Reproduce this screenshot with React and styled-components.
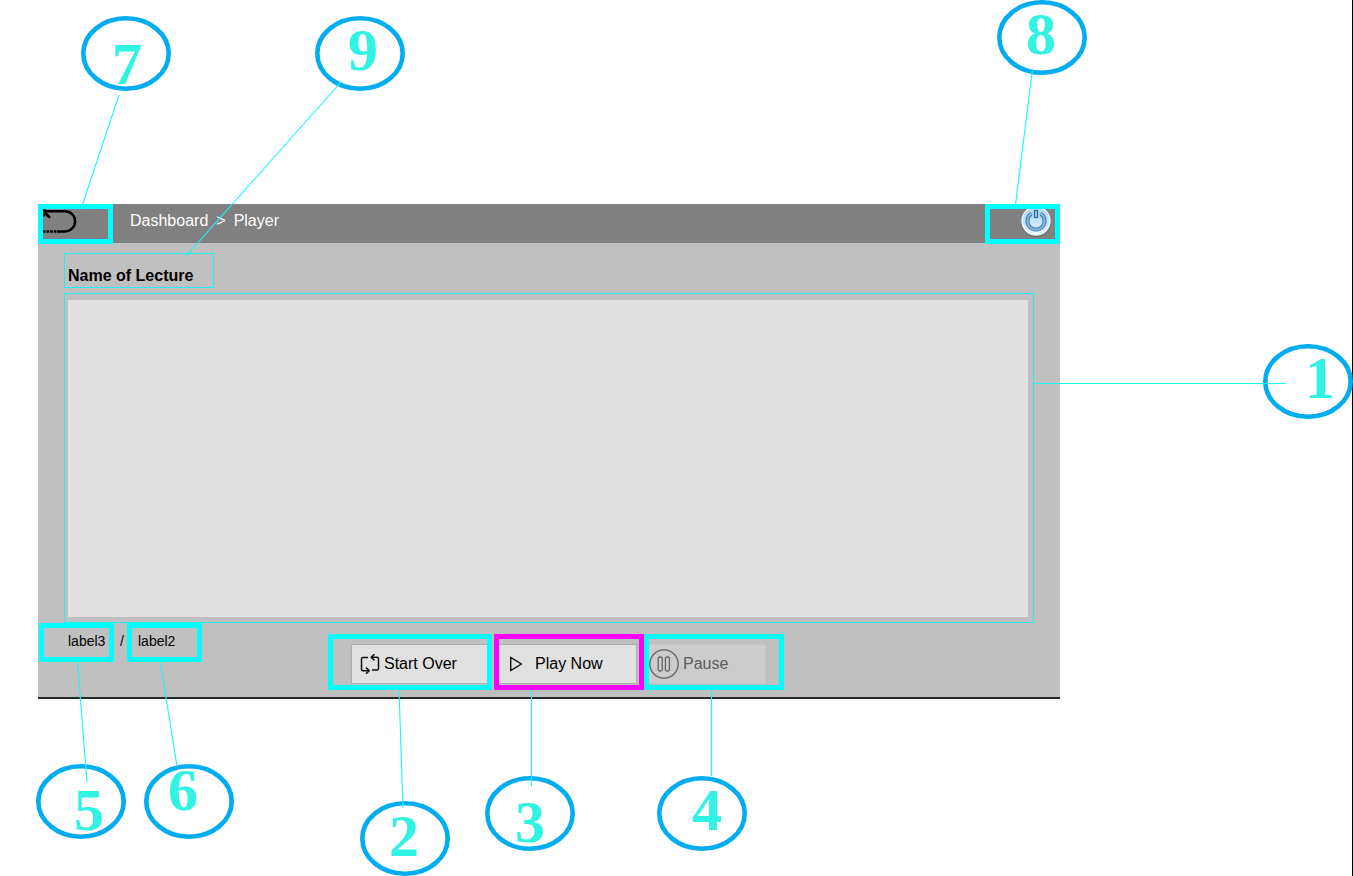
import React from "react";
import styled, { createGlobalStyle } from "styled-components";

const GlobalStyle = createGlobalStyle`
  *, *::before, *::after { box-sizing: border-box; }
  body {
    margin: 0;
    background: #ffffff;
    font-family: "Liberation Sans", Arial, sans-serif;
    font-size: 16px;
    color: #000000;
  }
`;

const Page = styled.main`
  position: relative;
  min-height: 100vh;
  padding: 204px 292px 0 38px;
  border-right: 1px solid #000000;
`;

const Player = styled.section`
  background: #c0c0c0;
  border-bottom: 2px solid #26282c;
`;

const TopBar = styled.header`
  display: flex;
  align-items: flex-start;
  height: 39px;
  background: #808080;
`;

const HeaderButton = styled.button`
  display: flex;
  justify-content: ${(p) => p.$align};
  width: 75px;
  height: 40px;
  padding: 0;
  border: 5px solid #00ffff;
  background: #808080;
  cursor: pointer;

  svg {
    display: block;
    flex: none;
  }
`;

const Breadcrumb = styled.nav`
  display: flex;
  flex: 1;
  gap: 8px;
  padding-left: 17px;
  line-height: 34px;
  color: #ffffff;

  a {
    color: inherit;
    text-decoration: none;
  }
`;

const Content = styled.div`
  padding: 10px 26px 0;
`;

const Title = styled.h1`
  width: 150px;
  height: 35px;
  margin: 0 0 5px;
  padding: 6px 0 0 3px;
  border: 1px solid #22f0f0;
  font-size: 16px;
  line-height: 32px;
  white-space: nowrap;
`;

const VideoFrame = styled.div`
  padding: 6px 5px 5px 3px;
  border: 1px solid #22f0f0;
`;

const Video = styled.div`
  height: 317px;
  background: #e0e0e0;
`;

const Footer = styled.footer`
  display: flex;
  align-items: flex-start;
  height: 74px;
  padding-left: 1px;
`;

const TimeLabel = styled.span`
  width: 75px;
  height: 39px;
  padding-left: ${(p) => p.$indent}px;
  border: 5px solid #00ffff;
  font-size: 14px;
  line-height: 26px;
`;

const Slash = styled.span`
  width: 13px;
  padding-left: 6px;
  font-size: 14px;
  line-height: 36px;
`;

const Controls = styled.div`
  display: flex;
  margin: 11px 0 0 126px;
`;

const Highlight = styled.div`
  width: ${(p) => p.$width}px;
  height: 56px;
  margin-right: ${(p) => p.$gap || 0}px;
  padding: 5px 0 1px ${(p) => p.$indent || 0}px;
  border: 5px solid ${(p) => p.$color || "#00ffff"};
`;

const ControlButton = styled.button`
  display: flex;
  align-items: center;
  gap: ${(p) => p.$gap}px;
  width: ${(p) => p.$width}px;
  height: 40px;
  padding: 0 0 0 ${(p) => p.$indent || 0}px;
  border: 1px solid #adadad;
  border-width: ${(p) => p.$edges};
  background: #e1e1e1;
  font: inherit;
  line-height: 20px;
  color: #000000;
  white-space: nowrap;

  &:disabled {
    border-color: #c4c4c4;
    background: #cccccc;
    color: #5c5c5c;
  }

  svg {
    display: block;
    flex: none;
  }
`;

const Bubble = styled.div`
  position: absolute;
  left: ${(p) => (p.$left === undefined ? "auto" : `${p.$left}px`)};
  right: ${(p) => (p.$right === undefined ? "auto" : `${p.$right}px`)};
  top: ${(p) => p.$top}px;
  width: 90px;
  height: 75px;
  pointer-events: none;

  svg {
    display: block;
    overflow: visible;
  }
`;

const Digit = styled.span`
  position: absolute;
  left: ${(p) => p.$x}px;
  top: ${(p) => p.$y}px;
  font: bold 60px/60px "Liberation Serif", "Times New Roman", serif;
  color: #30f3e3;
`;

const callouts = [
  { n: 7, left: 81, top: 16, line: [38, 79, 0, 193], digit: [31, 18] },
  { n: 9, left: 315, top: 16, line: [27, 65, -129, 240], digit: [33, 4] },
  { n: 8, right: 265, top: 0, line: [35.5, 69, 18, 209], digit: [29, 4] },
  { n: 1, right: -1, top: 344, line: [-229, 39.5, 23, 39.5], digit: [42, 4] },
  { n: 5, left: 36, top: 764, line: [41, -108, 51, 18], digit: [38, 16] },
  { n: 6, left: 144, top: 764, line: [16, -104, 33, 2], digit: [24, -4] },
  { n: 2, left: 360, top: 801, line: [39, -111, 43, 7], digit: [29, 5] },
  { n: 3, left: 485, top: 776, line: [46.5, -86, 46.5, 10], digit: [30, 16] },
  { n: 4, left: 657, top: 776, line: [54.5, -86, 54.5, 0], digit: [35, 4] },
];

function Callout({ n, left, right, top, line, digit }) {
  const [x1, y1, x2, y2] = line;
  return (
    <Bubble $left={left} $right={right} $top={top}>
      <svg width="90" height="75" fill="none" aria-hidden="true">
        <ellipse cx="45" cy="37.5" rx="42.7" ry="35.2" stroke="#00adf0" strokeWidth="4.6" />
        <line x1={x1} y1={y1} x2={x2} y2={y2} stroke="#16f8fa" strokeWidth="1.1" />
      </svg>
      <Digit $x={digit[0]} $y={digit[1]}>{n}</Digit>
    </Bubble>
  );
}

function BackIcon() {
  return (
    <svg width="34" height="30" fill="none" stroke="#000000" strokeWidth="2.5" aria-hidden="true">
      <path d="M1 2.2H22a10 10 0 0 1 0 20.2H14" />
      <path d="M1.2 0V6.2M0.5 2.2L6.2 8" strokeLinecap="round" />
      <path d="M0 22.4H14" strokeDasharray="2.6 1" />
    </svg>
  );
}

function PowerIcon() {
  return (
    <svg width="34" height="30" fill="none" aria-hidden="true">
      <defs>
        <linearGradient id="disc" x1="0" y1="0" x2="0" y2="1">
          <stop offset="0" stopColor="#a9d3ef" />
          <stop offset="0.5" stopColor="#c5e2f5" />
          <stop offset="1" stopColor="#f2faff" />
        </linearGradient>
      </defs>
      <circle cx="15" cy="13" r="15" fill="#5f6468" />
      <circle cx="15" cy="12" r="14" fill="url(#disc)" stroke="#eaf6fd" strokeWidth="1.4" />
      <path d="M10.6 4.6a8.6 8.6 0 1 0 8.8 0" stroke="#3f82b9" strokeWidth="4" />
      <path d="M10.6 4.6a8.6 8.6 0 1 0 8.8 0" stroke="#86b9e0" strokeWidth="1.8" />
      <rect x="13.5" y="1.5" width="3" height="7" fill="#9ccbed" stroke="#2a6ba6" strokeWidth="1.2" />
    </svg>
  );
}

function RepeatIcon() {
  return (
    <svg width="20" height="20" fill="none" stroke="#111111" strokeWidth="1.5" aria-hidden="true">
      <path d="M8 3.5H3a1.5 1.5 0 0 0-1.5 1.5V15.2a1.5 1.5 0 0 0 1.5 1.5H9" />
      <path d="M6 13.6L9.2 16.7L6 19.8" />
      <path d="M12 16H17a1.5 1.5 0 0 0 1.5-1.5V4.7a1.5 1.5 0 0 0-1.5-1.5H11.2" />
      <path d="M14.4 0.1L11.2 3.2L14.4 6.4" />
    </svg>
  );
}

function PlayIcon() {
  return (
    <svg width="14" height="16" fill="none" stroke="#111111" strokeWidth="1.4" aria-hidden="true">
      <path d="M1.7 1.4V14.6L12.4 8Z" />
    </svg>
  );
}

function PauseIcon() {
  return (
    <svg width="30" height="30" fill="none" stroke="#636363" strokeWidth="1.3" aria-hidden="true">
      <circle cx="15" cy="15" r="14.2" />
      <rect x="9.2" y="8" width="4" height="14" rx="1.5" />
      <rect x="16.4" y="8" width="4" height="14" rx="1.5" />
    </svg>
  );
}

export default function App() {
  return (
    <Page>
      <GlobalStyle />
      <Player>
        <TopBar>
          <HeaderButton $align="flex-start" aria-label="Back">
            <BackIcon />
          </HeaderButton>
          <Breadcrumb aria-label="Breadcrumb">
            <a href="#dashboard">Dashboard</a>
            <span>&gt;</span>
            <span>Player</span>
          </Breadcrumb>
          <HeaderButton $align="flex-end" aria-label="Power">
            <PowerIcon />
          </HeaderButton>
        </TopBar>
        <Content>
          <Title>Name of Lecture</Title>
          <VideoFrame>
            <Video />
          </VideoFrame>
        </Content>
        <Footer>
          <TimeLabel $indent={24}>label3</TimeLabel>
          <Slash>/</Slash>
          <TimeLabel $indent={6}>label2</TimeLabel>
          <Controls>
            <Highlight $width={164} $indent={18} $gap={2}>
              <ControlButton $width={136} $indent={8} $gap={4} $edges="1px 0 1px 1px">
                <RepeatIcon />
                Start Over
              </ControlButton>
            </Highlight>
            <Highlight $width={150} $color="#ff00ff">
              <ControlButton $width={138} $indent={10} $gap={12} $edges="1px 1px 1px 0">
                <PlayIcon />
                Play Now
              </ControlButton>
            </Highlight>
            <Highlight $width={140}>
              <ControlButton $width={117} $gap={4} $edges="1px 1px 1px 0" disabled>
                <PauseIcon />
                Pause
              </ControlButton>
            </Highlight>
          </Controls>
        </Footer>
      </Player>
      {callouts.map((c) => (
        <Callout key={c.n} {...c} />
      ))}
    </Page>
  );
}
